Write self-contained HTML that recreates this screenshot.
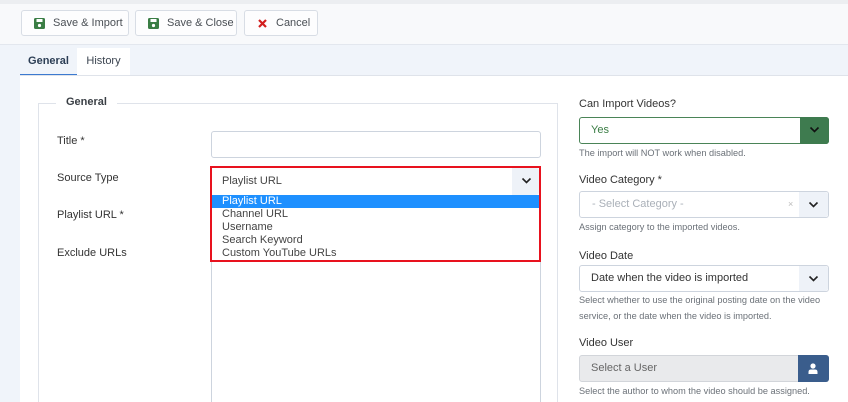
<!DOCTYPE html>
<html style="overflow:hidden;width:848px;height:402px"><head><style>
*{box-sizing:border-box;margin:0;padding:0}
body{width:848px;height:402px;overflow:hidden;background:#f0f4fa;font-family:"Liberation Sans",sans-serif;font-size:11px;color:#22262a;position:relative}
.abs{position:absolute}
.top{left:0;top:0;width:848px;height:4px;background:#eceef1}
.bar{left:0;top:4px;width:848px;height:41px;background:#f8f9fb;border-bottom:1px solid #e3e7ee}
.btn{top:10px;height:26px;background:#fdfdfe;border:1px solid #d8dde5;border-radius:3px;font-size:11px;color:#4a4f55;line-height:24px;padding-left:31px;white-space:nowrap;overflow:hidden}
.btn .ic{position:absolute;left:12px;top:7px}
.tab{top:48px;height:28px;line-height:27px;font-size:11px;text-align:center;white-space:nowrap}
.panel{left:20px;top:75px;width:828px;height:327px;background:#fff;border-top:1px solid #dfe3ea}
.fs{left:38px;top:103px;width:520px;height:310px;border:1px solid #dfe3ea}
.lbl{font-size:11px;color:#333;white-space:nowrap}
.inp{border:1px solid #cdd4de;border-radius:3px;background:#fff}
.help{font-size:9.2px;color:#6b7178;line-height:16px}
.chev{position:absolute;width:29px;top:0;bottom:0;right:0;background:#eef2f8;border-radius:0 3px 3px 0}
.chev svg{position:absolute;left:9px;top:9px}
</style></head><body>
<div class="abs top"></div>
<div class="abs bar"></div>
<div class="abs btn" style="left:21px;width:108px"><svg class="ic" width="11" height="11" viewBox="0 0 11 11"><rect x="0" y="0" width="11" height="11" rx="1.5" fill="#3a7d44"/><rect x="2.5" y="1" width="6" height="3" fill="#fff"/><circle cx="5.5" cy="7.5" r="1.6" fill="#fff"/></svg>Save &amp; Import</div>
<div class="abs btn" style="left:135px;width:102px"><svg class="ic" width="11" height="11" viewBox="0 0 11 11"><rect x="0" y="0" width="11" height="11" rx="1.5" fill="#3a7d44"/><rect x="2.5" y="1" width="6" height="3" fill="#fff"/><circle cx="5.5" cy="7.5" r="1.6" fill="#fff"/></svg>Save &amp; Close</div>
<div class="abs btn" style="left:244px;width:74px;padding-left:31px"><svg class="ic" style="left:13px;top:8px" width="9" height="9" viewBox="0 0 9 9"><path d="M1 1L8 8M8 1L1 8" stroke="#d21e1e" stroke-width="2.2"/></svg>Cancel</div>
<div class="abs tab" style="left:20px;width:57px;font-weight:bold;color:#2c3e55;border-bottom:2px solid #3c7ad0">General</div>
<div class="abs tab" style="left:77px;width:53px;background:#fff;color:#3b4450">History</div>
<div class="abs panel"></div>
<div class="abs fs"></div>
<div class="abs" style="left:56px;top:96px;background:#fff;padding:0 10px;font-weight:bold;font-size:11px;color:#3a3f45">General</div>
<div class="abs lbl" style="left:57px;top:135px">Title *</div>
<div class="abs lbl" style="left:57px;top:172px">Source Type</div>
<div class="abs lbl" style="left:57px;top:209px">Playlist URL *</div>
<div class="abs lbl" style="left:57px;top:247px">Exclude URLs</div>
<div class="abs inp" style="left:211px;top:131px;width:330px;height:27px"></div>
<div class="abs inp" style="left:211px;top:195px;width:330px;height:220px"></div>
<div class="abs" style="left:210px;top:166px;width:331px;height:96px;border:2px solid #e8121e;background:#fff"></div>
<div class="abs" style="left:212px;top:168px;width:327px;height:27px;background:#fff">
 <div style="position:absolute;left:10px;top:7px;color:#444;font-size:11px">Playlist URL</div>
 <div class="chev" style="width:27px"><svg width="11" height="8" viewBox="0 0 11 8"><path d="M1.5 1.5L5.5 5.5L9.5 1.5" stroke="#222" stroke-width="1.6" fill="none"/></svg></div>
</div>
<div class="abs" style="left:212px;top:195px;width:327px;font-size:11px;line-height:13px;color:#444">
 <div style="background:#1e90ff;color:#fff;padding-left:10px">Playlist URL</div>
 <div style="padding-left:10px">Channel URL</div>
 <div style="padding-left:10px">Username</div>
 <div style="padding-left:10px">Search Keyword</div>
 <div style="padding-left:10px">Custom YouTube URLs</div>
</div>
<div class="abs lbl" style="left:579px;top:98px">Can Import Videos?</div>
<div class="abs inp" style="left:579px;top:117px;width:250px;height:27px;border-color:#4a8457">
 <div style="position:absolute;left:11px;top:6px;color:#3a7d44">Yes</div>
 <div class="chev" style="background:#3e7b4f;width:29px;right:-1px;top:-1px;bottom:-1px"><svg width="11" height="8" viewBox="0 0 11 8"><path d="M1.5 1.5L5.5 5.5L9.5 1.5" stroke="#111" stroke-width="1.6" fill="none"/></svg></div>
</div>
<div class="abs help" style="left:579px;top:145px">The import will NOT work when disabled.</div>
<div class="abs lbl" style="left:579px;top:174px">Video Category *</div>
<div class="abs inp" style="left:579px;top:191px;width:250px;height:27px">
 <div style="position:absolute;left:12px;top:6px;color:#aab0b8">- Select Category -</div>
 <div style="position:absolute;left:208px;top:7px;color:#bbb;font-size:9px">×</div>
 <div class="chev"><svg width="11" height="8" viewBox="0 0 11 8"><path d="M1.5 1.5L5.5 5.5L9.5 1.5" stroke="#222" stroke-width="1.6" fill="none"/></svg></div>
</div>
<div class="abs help" style="left:579px;top:219px">Assign category to the imported videos.</div>
<div class="abs lbl" style="left:579px;top:250px">Video Date</div>
<div class="abs inp" style="left:579px;top:265px;width:250px;height:27px">
 <div style="position:absolute;left:11px;top:6px;color:#333">Date when the video is imported</div>
 <div class="chev"><svg width="11" height="8" viewBox="0 0 11 8"><path d="M1.5 1.5L5.5 5.5L9.5 1.5" stroke="#222" stroke-width="1.6" fill="none"/></svg></div>
</div>
<div class="abs help" style="left:579px;top:292px;width:260px">Select whether to use the original posting date on the video service, or the date when the video is imported.</div>
<div class="abs lbl" style="left:579px;top:337px">Video User</div>
<div class="abs inp" style="left:579px;top:355px;width:250px;height:27px;background:#e9eaec;border-color:#d2d5da">
 <div style="position:absolute;left:11px;top:6px;color:#666">Select a User</div>
 <div style="position:absolute;right:-1px;top:-1px;bottom:-1px;width:31px;background:#3a5d8c;border-radius:0 3px 3px 0"><svg style="position:absolute;left:10px;top:8px" width="10" height="11" viewBox="0 0 10 11"><circle cx="5" cy="3" r="2.6" fill="#fff"/><path d="M0.5 11V9Q0.5 6.5 3 6.5H7Q9.5 6.5 9.5 9V11Z" fill="#fff"/></svg></div>
</div>
<div class="abs help" style="left:579px;top:383px">Select the author to whom the video should be assigned.</div>
</body></html>
